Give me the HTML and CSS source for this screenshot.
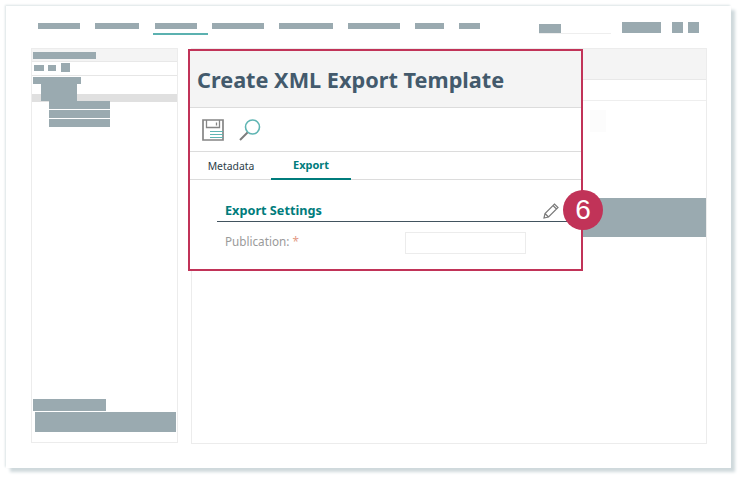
FILE: index.html
```html
<!DOCTYPE html>
<html lang="en">
<head>
<meta charset="utf-8">
<title>Create XML Export Template</title>
<link rel="stylesheet" href="styles.css">
</head>
<body>
<div class="frame">
  <header class="topbar">
    <nav class="nav">
      <span class="mask w42"></span>
      <span class="mask w44"></span>
      <span class="mask w42 active"></span>
      <span class="mask w52"></span>
      <span class="mask w54"></span>
      <span class="mask w52"></span>
      <span class="mask w29"></span>
      <span class="mask w21"></span>
    </nav>
    <div class="tools">
      <div class="searchbox"><span class="mask search"></span></div>
      <span class="mask tool-wide"></span>
      <span class="mask tool-sq first"></span>
      <span class="mask tool-sq"></span>
    </div>
  </header>
  <div class="content">
    <aside class="sidebar">
      <div class="side-head"><span class="mask s-title"></span></div>
      <div class="side-tools">
        <span class="mask st1"></span><span class="mask st2"></span><span class="mask st3"></span>
      </div>
      <div class="tree">
        <span class="mask t1"></span>
        <span class="selected"></span>
        <span class="mask t2"></span>
        <span class="mask t3"></span>
        <span class="mask t3"></span>
        <span class="mask t3"></span>
      </div>
      <div class="side-foot">
        <span class="mask f1"></span>
        <span class="mask f2"></span>
      </div>
    </aside>
    <main class="main">
      <div class="main-head"></div>
      <div class="main-row"></div>
      <div class="main-body">
        <span class="faint"></span>
        <span class="mask wide-band"></span>
      </div>
    </main>
    <section class="callout">
      <h1 class="title">Create XML Export Template</h1>
      <div class="toolbar">
        <svg class="ico-save" width="22" height="22" viewBox="0 0 22 22" fill="none">
          <path d="M1 1H21V21H1Z" stroke="#858585" stroke-width="1.7"/>
          <path d="M4.5 1V8.5H17.5V1" stroke="#858585" stroke-width="1.3"/>
          <path d="M14.5 3.5V6.5" stroke="#858585" stroke-width="1.3"/>
          <path d="M8 12.5H21M8 15.5H21M8 18.5H21" stroke="#5fb5b3" stroke-width="1.2"/>
        </svg>
        <svg class="ico-find" width="22" height="22" viewBox="0 0 22 22" fill="none">
          <circle cx="13.5" cy="8" r="7" stroke="#5fb5b3" stroke-width="1.6"/>
          <path d="M1 21L8.5 13.5" stroke="#7d7d7d" stroke-width="2"/>
        </svg>
      </div>
      <div class="tabs">
        <span class="tab">Metadata</span>
        <span class="tab on">Export</span>
      </div>
      <div class="panel">
        <div class="section">
          <span class="section-name">Export Settings</span>
          <svg class="ico-pen" width="16" height="16" viewBox="0 0 16 16" fill="none">
            <path d="M1 15L2 10.5L11.5 1L15 4.5L5.5 14Z M2 10.5L5.5 14 M10 2.5L13.5 6" stroke="#7a7a7a" stroke-width="1.2"/>
          </svg>
        </div>
        <div class="field">
          <label class="field-label">Publication: <span class="req">*</span></label>
          <span class="input"></span>
        </div>
      </div>
    </section>
    <span class="badge">6</span>
  </div>
</div>
</body>
</html>
```
FILE: styles.css
```css
* { box-sizing: border-box; }
html, body { margin: 0; padding: 0; background: #fff; }
body { width: 740px; height: 478px; overflow: hidden; font-family: "Noto Sans", sans-serif; padding: 6px 0 0 6px; }
.frame {
  width: 725px; height: 462px; background: #fff;
  box-shadow: 4px 4px 3px #cfd9dc, -1px -1px 2px #dbe3e5;
  display: flex; flex-direction: column;
}
.mask { display: block; background: #9aaab0; }
.topbar { height: 42px; display: flex; position: relative; }
.nav { display: flex; gap: 15px; padding: 17px 0 0 32px; align-items: flex-start; }
.nav .mask { height: 6px; }
.w42 { width: 42px; } .w44 { width: 44px; } .w52 { width: 52px; } .w54 { width: 54px; } .w29 { width: 29px; } .w21 { width: 21px; }
.active { position: relative; }
.active::after { content: ""; position: absolute; left: -2px; top: 10px; width: 55px; height: 1.5px; background: #5bb1b0; }
.nav .w44 { margin-right: 1px; }
.tools { display: flex; margin-left: 59px; padding-top: 16px; align-items: flex-start; }
.searchbox { width: 72px; height: 12px; padding-top: 2px; border-bottom: 1px solid #eee; }
.search { width: 22px; height: 9px; }
.tool-wide { width: 39px; height: 11px; margin-left: 11px; }
.tool-sq { width: 11px; height: 11px; margin-left: 5px; }
.tool-sq.first { margin-left: 11px; }
.content { position: relative; display: flex; gap: 13px; padding-left: 25px; }
.sidebar { width: 147px; height: 395px; border: 1px solid #ececec; display: flex; flex-direction: column; }
.side-head { height: 13px; background: #f4f4f4; border-bottom: 1px solid #e8e8e8; padding: 3px 0 0 1px; }
.s-title { width: 63px; height: 7px; }
.side-tools { height: 14px; display: flex; align-items: center; padding: 0 0 2px 2px; border-bottom: 1px solid #e6e6e6; }
.st1 { width: 10px; height: 6px; } .st2 { width: 8px; height: 6px; margin-left: 4px; } .st3 { width: 9px; height: 9px; margin-left: 5px; }
.tree { position: relative; padding-top: 1px; }
.selected { position: absolute; left: 0; right: 0; top: 18px; height: 8px; background: #e0e0e0; }
.tree .mask { position: relative; }
.t1 { width: 48px; height: 7px; margin-left: 1px; }
.t2 { width: 36px; height: 17px; margin-left: 9px; }
.t3 { width: 61px; height: 8px; margin: 0 0 1px 17px; }
.side-foot { margin-top: auto; padding-bottom: 10px; }
.f1 { width: 73px; height: 12px; margin-left: 1px; }
.f2 { width: 141px; height: 20px; margin: 1px 0 0 3px; }
.main { width: 516px; height: 396px; border: 1px solid #ececec; position: relative; }
.main-head { height: 31px; background: #f4f4f4; border-bottom: 1px solid #e8e8e8; }
.main-row { height: 21px; border-bottom: 1px solid #eee; }
.main-body { position: relative; }
.faint { position: absolute; left: 398px; top: 9px; width: 16px; height: 22px; background: #fcfcfc; }
.wide-band { position: absolute; left: 391px; top: 97px; width: 123px; height: 39px; }
.callout {
  position: absolute; left: 182px; top: 1px; width: 395px; height: 222px;
  border: 2px solid #c13358; background: #fff;
  display: flex; flex-direction: column;
}
.title {
  margin: 0; height: 57px; background: #f4f4f4; border-bottom: 1px solid #dcdcdc;
  font-size: 21.7px; font-weight: 700; color: #435a6c; line-height: 57px; padding-left: 7px;
}
.toolbar { height: 44px; border-bottom: 1px solid #dcdcdc; display: flex; align-items: center; padding-left: 12px; gap: 15px; }
.tabs { height: 28px; border-bottom: 1px solid #dcdcdc; display: flex; font-size: 10.4px; padding-left: 1px; }
.tab { width: 80px; text-align: center; line-height: 28px; color: #2c3e4a; }
.tab.on { color: #007c7c; font-weight: 700; font-size: 11px; border-bottom: 2px solid #007c7c; height: 28px; line-height: 26px; }
.panel { padding: 21px 0 0 27px; }
.section { height: 21px; width: 352px; border-bottom: 1px solid #42545f; display: flex; justify-content: space-between; align-items: center; padding: 0 10px 0 8px; }
.section-name { color: #007c7c; font-weight: 700; font-size: 12.7px; padding-bottom: 2px; }
.ico-pen { margin-top: -1px; }
.field { display: flex; align-items: center; margin-top: 10px; padding-left: 8px; }
.field-label { width: 180px; font-size: 11.7px; color: #9a9a9a; padding-bottom: 4px; }
.req { color: #e39a85; }
.input { width: 121px; height: 22px; border: 1px solid #ececec; }
.badge {
  position: absolute; left: 557px; top: 142px; width: 40px; height: 40px; border-radius: 50%;
  background: #c13358; color: #fff; font-family: "Liberation Sans", sans-serif; font-size: 28px;
  display: flex; align-items: center; justify-content: center;
}
```
